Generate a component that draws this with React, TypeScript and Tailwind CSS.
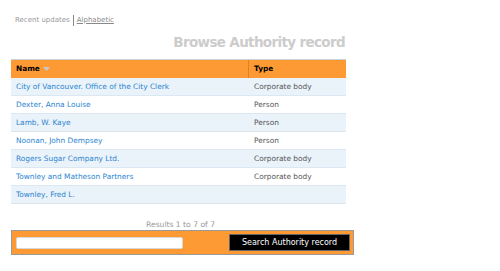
import React from "react";

const rows: [string, string][] = [
  ["City of Vancouver. Office of the City Clerk", "Corporate body"],
  ["Dexter, Anna Louise", "Person"],
  ["Lamb, W. Kaye", "Person"],
  ["Noonan, John Dempsey", "Person"],
  ["Rogers Sugar Company Ltd.", "Corporate body"],
  ["Townley and Matheson Partners", "Corporate body"],
  ["Townley, Fred L.", ""],
];

export default function App() {
  return (
    <div
      className="w-[500px] h-[271px] bg-white overflow-hidden"
      style={{ fontFamily: '"DejaVu Sans", Verdana, sans-serif' }}
    >
      <div className="pl-[11px] pt-[15px]">
        <div className="flex items-center h-[10px] pl-[4px] text-[7px] text-[#999]">
          <span>Recent updates</span>
          <span className="ml-[3px] pl-[3px] border-l border-[#888] h-[11px] flex items-center text-[#888] underline">
            Alphabetic
          </span>
        </div>
        <div className="w-[335px] flex justify-end mt-[8px] pr-[1px]">
          <h1 className="text-[13.5px] leading-[18px] font-bold tracking-[-0.65px] text-[#cccccc]">
            Browse Authority record
          </h1>
        </div>
        <div className="w-[335px] mt-[8px] border-t border-[#c9d3dc]">
          <div className="flex h-[18px] bg-[#fd9a34] text-[7.4px] font-bold text-black items-center">
            <div className="w-[238px] pl-[5px] flex items-center gap-[3px] border-r border-[#d9822a] h-full">
              <span>Name</span>
              <svg width="7" height="4" viewBox="0 0 7 4">
                <path d="M0 0 L7 0 L3.5 4 Z" fill="#c8c8c8" />
              </svg>
            </div>
            <div className="pl-[5px]">Type</div>
          </div>
          {rows.map(([name, type], i) => (
            <div
              key={i}
              className={`flex h-[18px] items-center text-[7.4px] border-b border-[#dbe7f2] ${
                i % 2 === 0 ? "bg-[#eaf2fa]" : "bg-white"
              }`}
            >
              <div className="w-[238px] pl-[5px] text-[#2b85d0]">{name}</div>
              <div className="pl-[5px] text-[#555]">{type}</div>
            </div>
          ))}
        </div>
        <div className="w-[335px] text-center mt-[15px] text-[7.6px] text-[#999] pl-[4px]">
          Results 1 to 7 of 7
        </div>
        <div className="w-[343px] h-[25px] bg-[#fd9a34] border border-[#9a9a9a] flex items-center pl-[4px] pr-[3px] justify-between">
          <div className="w-[167px] h-[12px] bg-white border border-[#d8d8d8] rounded-[2px]" />
          <div className="w-[121px] h-[17px] bg-black border border-[#666] flex items-center justify-center text-white text-[8px]">
            Search Authority record
          </div>
        </div>
      </div>
    </div>
  );
}
